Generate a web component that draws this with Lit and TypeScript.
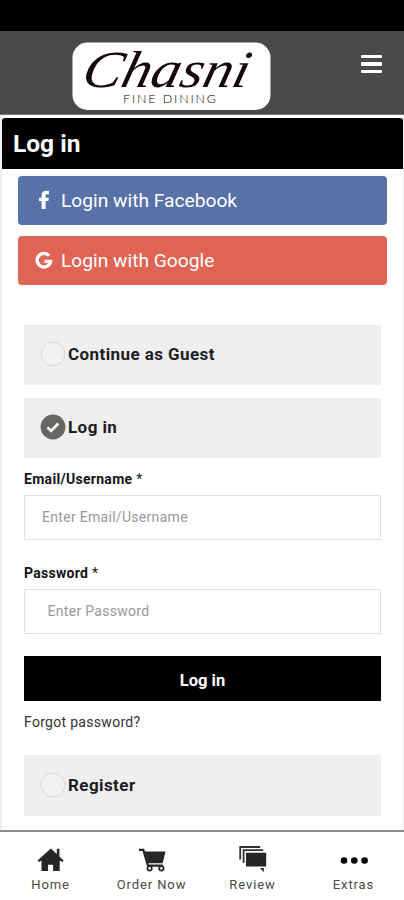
import { LitElement, html, css, svg } from "lit";
import { customElement, property } from "lit/decorators.js";

@customElement("option-row")
class OptionRow extends LitElement {
  @property() label = "";
  @property({ type: Boolean }) checked = false;
  static styles = css`
    :host { display: flex; align-items: center; box-sizing: border-box; height: 60px; padding: 0 0 2px 16px; background: #efefef; }
    svg { display: block; width: 26px; height: 26px; margin-right: 2px; flex: none; }
    span { font: 700 17px/20px Roboto, sans-serif; letter-spacing: 0.42px; color: #1c1c1e; white-space: nowrap; padding-bottom: 1px; }
  `;
  render() {
    return html`<svg viewBox="0 0 26 26">
        ${this.checked
          ? svg`<circle cx="13" cy="13" r="12.4" fill="#666663" /><path d="M7.5 13.4l3.6 3.5 7.2-7.4" fill="none" stroke="#fff" stroke-width="2.6" />`
          : svg`<circle cx="13" cy="13" r="11.9" fill="#f1f1f1" stroke="#d9d9d9" stroke-width="1" />`}
      </svg><span>${this.label}</span>`;
  }
}

const icons: Record<string, unknown> = {
  Home: svg`<path d="M14.8 2.5L1.6 14.6l1.2 1.3 2.7-1.5V25h6.6v-6.2h5V25h6.6V14.4l2.7 1.5 1.2-1.3-4.2-4V2.7h-2.6v5.2z" fill="#262626" />`,
  "Order Now": svg`<path d="M2 3.8h4.3l4.6 15.8h15" fill="none" stroke="#262626" stroke-width="2.2" /><path d="M7.6 5.6H28.6l-3 11.7H11z" fill="#262626" /><circle cx="12.6" cy="22.4" r="2.2" fill="#fff" stroke="#262626" stroke-width="1.7" /><circle cx="24.4" cy="22.4" r="2.2" fill="#fff" stroke="#262626" stroke-width="1.7" />`,
  Review: svg`<path d="M2.2 13.5V1H22.2M5.6 17V4.2H25.2" fill="none" stroke="#333" stroke-width="1.8" /><path d="M8 6.8h20.2v13.6H8zM22 22h3.8v4.2z" fill="#262626" />`,
  Extras: svg`<circle cx="5" cy="14.5" r="3.3" fill="#000" /><circle cx="15.3" cy="14.5" r="3.3" fill="#000" /><circle cx="25.6" cy="14.5" r="3.3" fill="#000" />`,
};

@customElement("app-root")
class AppRoot extends LitElement {
  static styles = css`
    :host { display: flex; flex-direction: column; height: 900px; width: 404px; overflow: hidden; background: #fff; font-family: Roboto, sans-serif; }
    .status { height: 31px; flex: none; background: #000; }
    .top { flex: none; box-sizing: border-box; height: 84px; background: #4a4a4a; border-bottom: 1px solid #777; display: flex; align-items: flex-start; justify-content: space-between; padding: 11px 22px 0 72px; }
    .logo { width: 199px; height: 69px; display: block; overflow: visible; }
    .burger { width: 21px; display: flex; flex-direction: column; gap: 4px; padding-top: 12.5px; }
    .burger i { height: 3.5px; background: #fff; border-radius: 1px; }
    .page { flex: 1; min-height: 0; box-sizing: border-box; padding-top: 3px; border: solid #efefef; border-width: 0 1px 0 2px; display: flex; flex-direction: column; }
    h1 { margin: 0; box-sizing: border-box; height: 51px; background: #000; color: #fff; border-radius: 3px 3px 0 0; font: 700 24.5px/52px Roboto, sans-serif; padding-left: 11px; }
    .social { display: flex; flex-direction: column; gap: 11px; padding: 7px 16px 0 16px; }
    .sbtn { height: 49px; border-radius: 4px; display: flex; align-items: center; color: #fff; font-size: 19.2px; line-height: 48px; padding-left: 16px; }
    .fb { background: #5871a7; }
    .gg { background: #e06456; }
    .sbtn svg { width: 20px; height: 20px; margin: 0 7px 2px 0; }
    .form { padding: 40px 22px 0 22px; display: flex; flex-direction: column; }
    .opt2 { margin-top: 13px; }
    label { font: 700 14px/18px Roboto, sans-serif; color: #141414; letter-spacing: 0.3px; }
    .l1 { margin-top: 12px; }
    .l2 { margin-top: 24px; }
    .star { font-weight: 400; }
    .field { box-sizing: border-box; height: 45px; margin-top: 7px; border: 1.5px solid #e2e2e2; font-size: 14px; line-height: 43px; color: #989898; padding-left: 17px; letter-spacing: 0.3px; }
    .pw { padding-left: 22.5px; }
    .go { margin-top: 22px; height: 45px; background: #000; color: #fff; font: 700 16.5px/49px Roboto, sans-serif; text-align: center; }
    .forgot { margin-top: 12px; height: 18px; font-size: 14px; line-height: 18px; letter-spacing: 0.3px; color: #333; }
    .reg { margin-top: 24px; height: 61px; padding-bottom: 1px; }
    nav { flex: none; box-sizing: border-box; height: 70px; border-top: 2px solid #8c8c8c; background: #fff; display: grid; grid-template-columns: repeat(4, 1fr); }
    .tab { display: flex; flex-direction: column; align-items: center; padding-top: 14px; }
    .tab svg { width: 30px; height: 28px; display: block; }
    .tab span { font-size: 13px; line-height: 16px; letter-spacing: 0.9px; color: #4a4a4a; margin-top: 3px; white-space: nowrap; }
  `;
  render() {
    return html`
      <div class="status"></div>
      <header class="top">
        <svg class="logo" viewBox="0 0 199 69">
          <rect x="0.5" y="0.5" width="198" height="67.5" rx="15" fill="#fff" />
          <text transform="translate(8 45) skewX(-14)" textLength="166" lengthAdjust="spacingAndGlyphs" font-family="'Liberation Serif', serif" font-style="italic" font-size="52" fill="#160508">Chasni</text>
          <text x="51" y="61" textLength="93" font-family="Lato, sans-serif" font-weight="300" font-size="12.5" fill="#000">FINE DINING</text>
        </svg>
        <div class="burger"><i></i><i></i><i></i></div>
      </header>
      <main class="page">
        <h1>Log in</h1>
        <div class="social">
          <div class="sbtn fb">
            <svg viewBox="0 0 20 20"><path d="M7.6 19v-8H5V7.7h2.6V5.2C7.6 2.2 9.5.8 12.3.8c1.2 0 2.2.1 2.7.2v3.2h-1.6c-1.4 0-1.8.7-1.8 1.7v1.8h3.2l-.5 3.3h-2.7v8z" fill="#fff" /></svg>
            Login with Facebook
          </div>
          <div class="sbtn gg">
            <svg viewBox="0 0 20 20"><path d="M15.1 5.7A6.8 6.8 0 1 0 16.7 11.3H10.4" fill="none" stroke="#fff" stroke-width="3.3" /></svg>
            Login with Google
          </div>
        </div>
        <div class="form">
          <option-row label="Continue as Guest"></option-row>
          <option-row class="opt2" label="Log in" checked></option-row>
          <label class="l1">Email/Username <span class="star">*</span></label>
          <div class="field">Enter Email/Username</div>
          <label class="l2">Password <span class="star">*</span></label>
          <div class="field pw">Enter Password</div>
          <div class="go">Log in</div>
          <div class="forgot">Forgot password?</div>
          <option-row class="reg" label="Register"></option-row>
        </div>
      </main>
      <nav>
        ${Object.keys(icons).map((name) => html`<div class="tab"><svg viewBox="0 0 30 28">${icons[name]}</svg><span>${name}</span></div>`)}
      </nav>
    `;
  }
}
